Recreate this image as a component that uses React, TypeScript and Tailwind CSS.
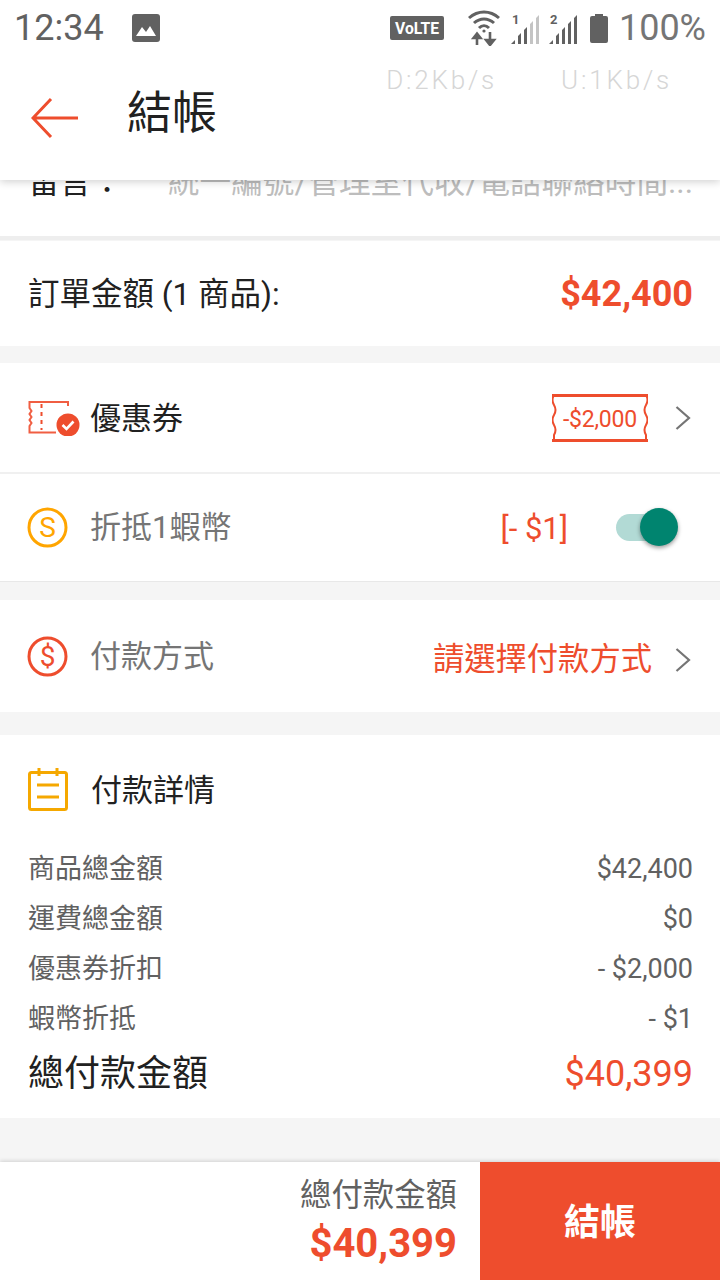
import React from 'react';

const FONT = "font-['Roboto','Noto_Sans_CJK_TC',sans-serif]";

const Chevron = () => (
  <svg width="18" height="26" viewBox="0 0 18 26" fill="none" stroke="#757575" strokeWidth="2.2">
    <path d="M2.5 2 L15 13 L2.5 24" />
  </svg>
);

const StatusIcons = () => (
  <div className="flex items-center">
    <svg width="54" height="26" viewBox="0 0 54 26" className="mr-[24px]">
      <rect x="0" y="1" width="54" height="24" rx="2" fill="#616161" />
      <text x="27" y="19" textAnchor="middle" fontSize="17" fontWeight="700" fill="#fff" fontFamily="Roboto" textLength="44" lengthAdjust="spacingAndGlyphs">VoLTE</text>
    </svg>
    <svg width="32" height="36" viewBox="0 0 32 36" className="mr-[10px]" fill="none" stroke="#616161">
      <path d="M1 8 C10 0 22 0 31 8" strokeWidth="3" />
      <path d="M6 13 C12 7.5 20 7.5 26 13" strokeWidth="3" />
      <path d="M11 18 C14 15 18 15 21 18" strokeWidth="3" />
      <circle cx="16" cy="21" r="1.6" fill="#616161" stroke="none" />
      <path d="M9 35 V27 M5.5 28 L9 23.5 L12.5 28 Z" strokeWidth="2.6" fill="#616161" />
      <path d="M22 22 V31 M18 30 L22 35 L26 30 Z" strokeWidth="2.6" fill="#616161" />
    </svg>
    <svg width="30" height="32" viewBox="0 0 30 32" className="mr-[8px]">
      <text x="2" y="12" fontSize="13" fontWeight="700" fill="#616161" fontFamily="Roboto">1</text>
      <path d="M1 32 L5 28 V32 Z M8 32 V24 L11 21 V32 Z" fill="#616161" />
      <path d="M14 32 V18 L17 15 V32 Z" fill="#616161" />
      <path d="M20 32 V12 L23 9 V32 Z M26 32 V6 L29 3 V32 Z" fill="#c4c4c4" />
    </svg>
    <svg width="30" height="32" viewBox="0 0 30 32" className="mr-[12px]">
      <text x="2" y="12" fontSize="13" fontWeight="700" fill="#616161" fontFamily="Roboto">2</text>
      <path d="M1 32 L5 28 V32 Z M8 32 V24 L11 21 V32 Z M14 32 V18 L17 15 V32 Z M20 32 V12 L23 9 V32 Z M26 32 V6 L29 3 V32 Z" fill="#616161" />
    </svg>
    <svg width="18" height="30" viewBox="0 0 18 30" className="mr-[11px]">
      <path d="M5 3 V1 H13 V3 H16 Q18 3 18 5 V28 Q18 30 16 30 H2 Q0 30 0 28 V5 Q0 3 2 3 Z" fill="#616161" />
    </svg>
    <span className="text-[36px] leading-none text-[#757575]">100%</span>
  </div>
);

const CouponIcon = () => (
  <svg width="52" height="36" viewBox="0 0 52 36">
    <path d="M30 2 H1.5 V8 L3.5 11 L1.5 14 L3.5 17 L1.5 20 L3.5 23 L1.5 26 V32.5 H28 M30 2 H40 V6" fill="none" stroke="#ee4d2d" strokeWidth="2" opacity="0.9" />
    <path d="M13.5 4 V30" stroke="#ee4d2d" strokeWidth="2" strokeDasharray="4 4" />
    <circle cx="40" cy="25" r="11.5" fill="#ee4d2d" />
    <path d="M34.5 25 L38.5 29 L45.5 21.5" fill="none" stroke="#fff" strokeWidth="2.6" />
  </svg>
);

const CouponTag = () => (
  <div className="relative flex h-[48px] w-[96px] items-center justify-center">
    <svg width="96" height="48" viewBox="0 0 96 48" fill="none" stroke="#ee4d2d" className="absolute inset-0">
      <path d="M0 1.5 H96 M0 46.5 H96" strokeWidth="3" />
      <path d="M2 1 Q-1 6 2 11 Q5 16 2 21 Q-1 26 2 31 Q5 36 2 41 L2 47" strokeWidth="2" />
      <path d="M94 1 Q97 6 94 11 Q91 16 94 21 Q97 26 94 31 Q91 36 94 41 L94 47" strokeWidth="2" />
    </svg>
    <span className="pt-[3px] text-[23px] leading-none tracking-[-0.2px] text-[#ee4d2d]">-$2,000</span>
  </div>
);

const Row = ({ label, value }: { label: string; value: string }) => (
  <div className="flex h-[50px] items-center justify-between text-[27px] text-[#616161]">
    <span>{label}</span>
    <span>{value}</span>
  </div>
);

export default function App() {
  return (
    <div className={`flex h-[1280px] w-[720px] flex-col overflow-hidden bg-[#f5f5f5] ${FONT}`}>
      {/* app bar with status bar */}
      <header className="relative z-10 h-[180px] shrink-0 bg-white shadow-[0_2px_8px_rgba(0,0,0,0.18)]">
        <div className="flex h-[56px] items-center justify-between pl-[14px] pr-[14px]">
          <div className="flex items-center">
            <span className="text-[36px] leading-none text-[#616161]">12:34</span>
            <svg width="28" height="28" viewBox="0 0 28 28" className="ml-[28px]">
              <rect width="28" height="28" rx="3" fill="#616161" />
              <path d="M4 22 L10 13 L14 18 L18 12 L24 22 Z" fill="#fff" />
            </svg>
          </div>
          <StatusIcons />
        </div>
        <div className="mt-[11px] flex h-[24px] justify-end pr-[48px] text-[26px] leading-none tracking-[2.8px] text-[#d6d6d6]">
          <span className="mr-[64px] font-light">D:2Kb/s</span>
          <span className="font-light">U:1Kb/s</span>
        </div>
        <div className="flex items-center pl-[31px]">
          <svg width="48" height="42" viewBox="0 0 48 42" fill="none" stroke="#ee4d2d" strokeWidth="3">
            <path d="M47 21 H3 M20 2 L2 21 L20 40" />
          </svg>
          <span className="mb-[8px] ml-[48px] text-[45px] leading-none text-[#212121]">結帳</span>
        </div>
      </header>

      <main className="min-h-0 flex-1 overflow-hidden">
        {/* note row, scrolled under the bar */}
        <div className="-mt-[40px] flex h-[100px] items-center border-b-[4px] border-[#eeeeee] bg-white pb-[10px] pl-[28px] pr-[20px] text-[31.6px]">
          <span className="w-[140px] shrink-0 text-[#212121]">留言：</span>
          <span className="min-w-0 truncate text-[#bdbdbd]">統一編號/管理室代收/電話聯絡時間...</span>
        </div>

        <section className="mt-[1px] flex h-[105px] items-center justify-between bg-white pl-[28px] pr-[27px]">
          <span className="mt-[3px] text-[31.5px] text-[#212121]">訂單金額 (1 商品):</span>
          <span className="text-[36px] font-bold text-[#ee4d2d]">$42,400</span>
        </section>

        <section className="mt-[17px] bg-white">
          <div className="flex h-[109px] items-center pl-[28px] pr-[28px]">
            <CouponIcon />
            <span className="ml-[10px] mt-[3px] flex-1 text-[31px] text-[#212121]">優惠券</span>
            <CouponTag />
            <span className="ml-[26px] flex"><Chevron /></span>
          </div>
          <div className="h-[2px] bg-[#f0f0f0]" />
          <div className="flex h-[108px] items-center border-b border-[#e8e8e8] pl-[27px] pr-[54px]">
            <svg width="41" height="41" viewBox="0 0 41 41" fill="none" stroke="#ffa500">
              <circle cx="20.5" cy="20.5" r="18.5" strokeWidth="3" />
              <text x="20.5" y="30" textAnchor="middle" fontSize="28" fill="#ffa500" stroke="none" fontFamily="Roboto">S</text>
            </svg>
            <span className="ml-[22px] mt-[2px] flex-1 text-[31px] text-[#757575]">折抵1蝦幣</span>
            <span className="mr-[48px] mt-[3px] text-[31px] text-[#ee4d2d]">[- $1]</span>
            <div className="relative h-[27px] w-[50px] rounded-full bg-[#b2dad5]">
              <div className="absolute -right-[12px] -top-[6px] h-[38px] w-[38px] rounded-full bg-[#00846f] shadow-[0_2px_4px_rgba(0,0,0,0.4)]" />
            </div>
          </div>
        </section>

        <section className="mt-[18px] flex h-[112px] items-center bg-white pl-[27px] pr-[28px]">
          <svg width="41" height="41" viewBox="0 0 41 41" fill="none" stroke="#ee4d2d">
            <circle cx="20.5" cy="20.5" r="18.5" strokeWidth="3" />
            <text x="20.5" y="30" textAnchor="middle" fontSize="28" fill="#ee4d2d" stroke="none" fontFamily="Roboto">$</text>
          </svg>
          <span className="ml-[22px] mt-[3px] flex-1 text-[31px] text-[#757575]">付款方式</span>
          <span className="mt-[9px] text-[31.3px] text-[#ee4d2d]">請選擇付款方式</span>
          <span className="ml-[22px] mt-[7px] flex"><Chevron /></span>
        </section>

        <section className="mt-[23px] h-[383px] bg-white pl-[28px] pr-[27px] pt-[31px]">
          <div className="flex h-[46px] items-center">
            <svg width="40" height="44" viewBox="0 0 40 44" fill="none" stroke="#f5a800" strokeWidth="3">
              <rect x="1.5" y="5.5" width="37" height="37" rx="2" />
              <path d="M11 1 V9 M29 1 V9 M9 18 H31 M9 30 H31" />
            </svg>
            <span className="ml-[23px] mt-[4px] text-[31px] text-[#212121]">付款詳情</span>
          </div>
          <div className="mt-[32px]">
            <Row label="商品總金額" value="$42,400" />
            <Row label="運費總金額" value="$0" />
            <Row label="優惠券折扣" value="- $2,000" />
            <Row label="蝦幣折抵" value="- $1" />
          </div>
          <div className="flex h-[60px] items-center justify-between">
            <span className="text-[36px] text-[#212121]">總付款金額</span>
            <span className="text-[36px] text-[#ee4d2d]">$40,399</span>
          </div>
        </section>
      </main>

      <footer className="flex h-[118px] shrink-0 bg-white shadow-[0_-1px_4px_rgba(0,0,0,0.15)]">
        <div className="flex flex-1 flex-col items-end pr-[23px] pt-[14px]">
          <span className="text-[31.4px] leading-[40px] text-[#616161]">總付款金額</span>
          <span className="mt-[4px] text-[40px] font-bold leading-[48px] text-[#ee4d2d]">$40,399</span>
        </div>
        <button className="h-full w-[240px] bg-[#ee4d2d] pt-[4px] text-[36px] font-bold text-white">結帳</button>
      </footer>
    </div>
  );
}
